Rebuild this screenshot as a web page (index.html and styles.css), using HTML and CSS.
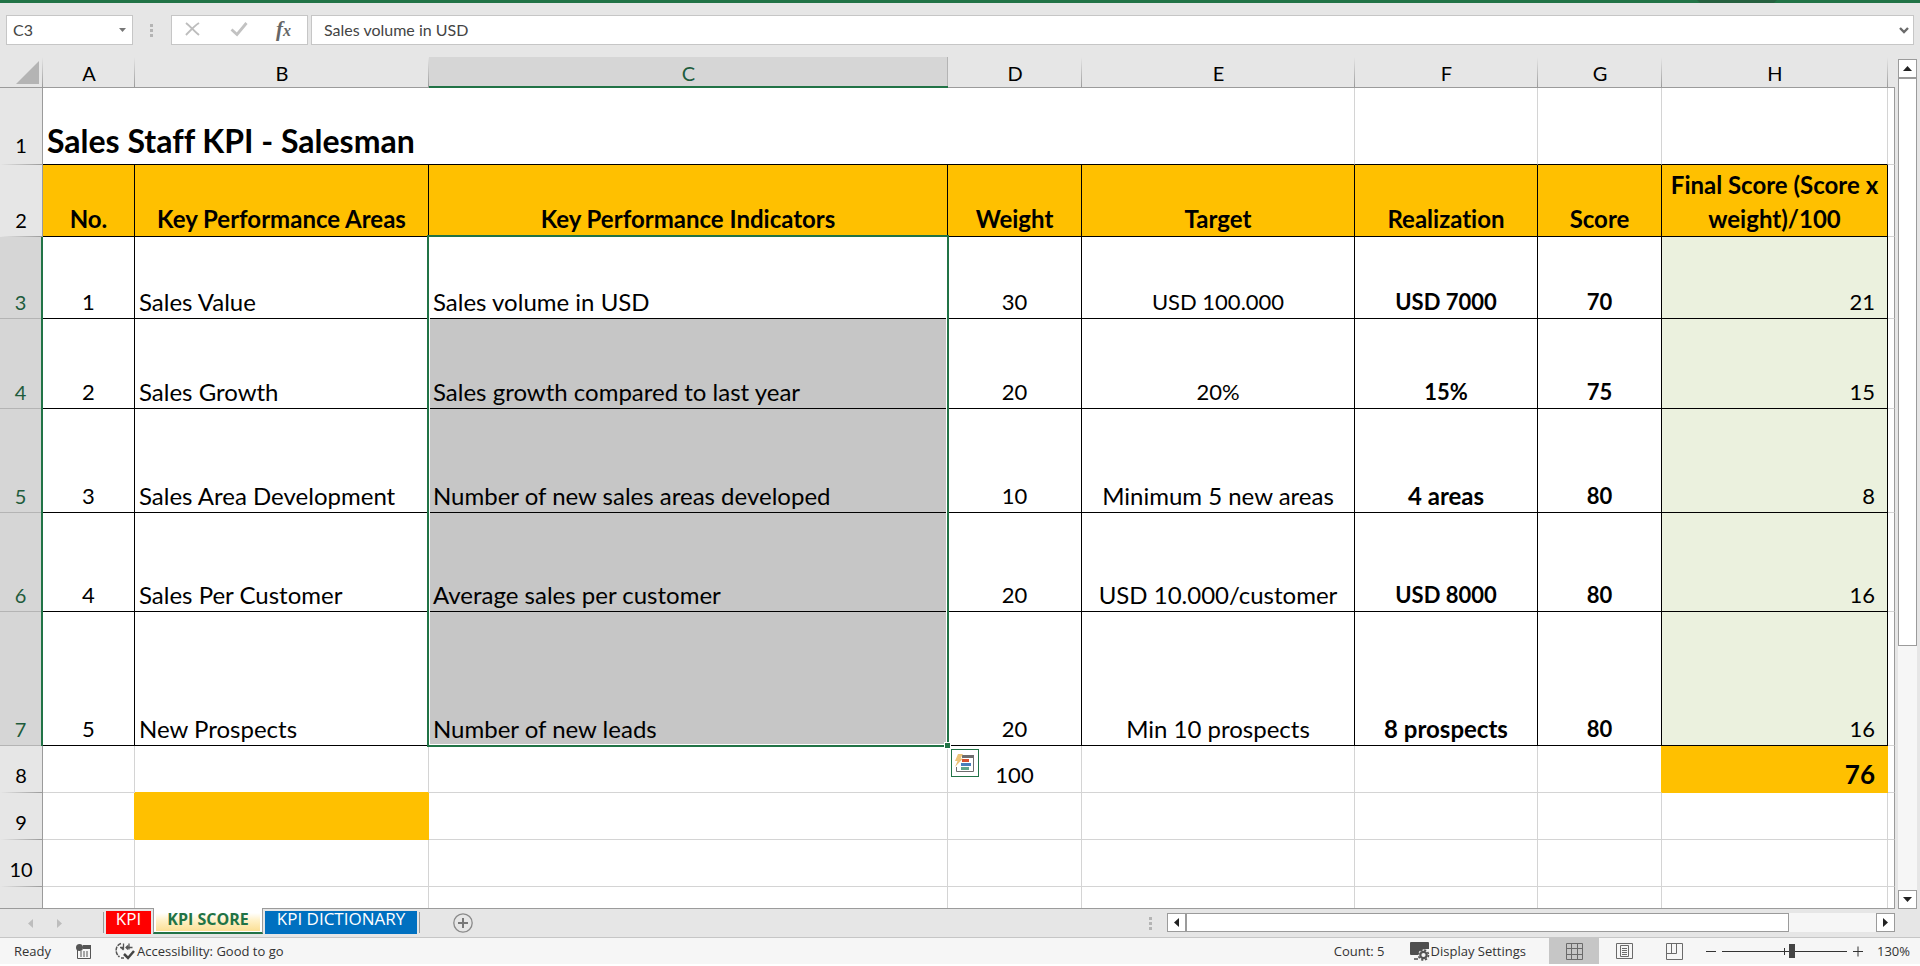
FILE: index.html
```html
<!DOCTYPE html>
<html lang="en">
<head>
<meta charset="utf-8">
<title>Sales Staff KPI - Salesman</title>
<link rel="stylesheet" href="styles.css">
</head>
<body>
<div class="app">
  <div class="ribbon-edge"><span class="ribbon-shade"></span></div>

  <div class="formula-bar">
    <div class="name-box">
      <input class="name-input" type="text" value="C3" aria-label="Name box">
      <button class="plain-btn name-drop" type="button" aria-label="Open name list">
        <svg width="7" height="4" viewBox="0 0 7 4"><path d="M0 0h7L3.500 4z" fill="#777"/></svg>
      </button>
    </div>
    <span class="grip" aria-hidden="true"><i></i><i></i><i></i></span>
    <div class="fx-box">
      <button class="plain-btn" type="button" aria-label="Cancel">
        <svg width="18" height="16" viewBox="0 0 18 16"><path d="M2 2c4 3 8 8 13 12M15 2C10 5 6 10 2 14" fill="none" stroke="#bdbdbd" stroke-width="2"/></svg>
      </button>
      <button class="plain-btn" type="button" aria-label="Enter">
        <svg width="18" height="16" viewBox="0 0 18 16"><path d="M1.500 8.500l5.500 5L16.500 2" fill="none" stroke="#c2c2c2" stroke-width="2.800"/></svg>
      </button>
      <button class="plain-btn fx-btn" type="button" aria-label="Insert function"><span class="fx-f">f</span><span class="fx-x">x</span></button>
    </div>
    <div class="formula-box">
      <input class="formula-input" type="text" value="Sales volume in USD" aria-label="Formula">
      <button class="plain-btn" type="button" aria-label="Expand formula bar">
        <svg width="10" height="7" viewBox="0 0 10 7"><path d="M1 1l4 4 4-4" fill="none" stroke="#6a6a6a" stroke-width="2.400"/></svg>
      </button>
    </div>
  </div>

  <div class="workspace">
    <div class="grid">
      <table class="sheet">
        <colgroup>
          <col class="c-head"><col class="c-a"><col class="c-b"><col class="c-c"><col class="c-d"><col class="c-e"><col class="c-f"><col class="c-g"><col class="c-h"><col>
        </colgroup>
        <thead>
          <tr class="r-cols">
            <th class="corner"><svg width="23" height="23" viewBox="0 0 23 23"><path d="M23 0v23H0z" fill="#b4b4b4"/></svg></th>
            <th scope="col">A</th><th scope="col">B</th><th scope="col" class="picked">C</th><th scope="col">D</th><th scope="col">E</th><th scope="col">F</th><th scope="col">G</th><th scope="col">H</th><th class="rest"></th>
          </tr>
        </thead>
        <tbody>
          <tr class="r1"><th scope="row">1</th><td class="title ink-b" colspan="5">Sales Staff KPI - Salesman</td><td class="ink-b"></td><td class="ink-b"></td><td class="ink-b"></td><td class="rest"></td></tr>
          <tr class="r2 heading"><th scope="row">2</th><td>No.</td><td>Key Performance Areas</td><td>Key Performance Indicators</td><td>Weight</td><td>Target</td><td>Realization</td><td>Score</td><td>Final Score (Score x weight)/100</td><td class="rest"></td></tr>
          <tr class="r3 data"><th scope="row">3</th><td>1</td><td class="left">Sales Value</td><td class="left anchor">Sales volume in USD
              <div class="selection"><span class="handle"></span>
                <button class="plain-btn quick" type="button" aria-label="Quick analysis">
                  <svg width="20" height="19" viewBox="0 0 20 19"><path d="M1.500 13v4.500h17V2" fill="none" stroke="#6d6d6d"/><path d="M7 1h12v3H7z" fill="#6d6d6d"/><path d="M7 5h7v3H7z" fill="#d9502e"/><path d="M6 9h10v3H6z" fill="#4a7ebb"/><path d="M6 13h8v3H6z" fill="#5fa58c"/><path d="M3 0h5L5.500 4.500H8L0 13l2.500-6H0z" fill="#edc377"/></svg>
                </button>
              </div></td><td>30</td><td>USD 100.000</td><td class="bold">USD 7000</td><td class="bold">70</td><td class="final">21</td><td class="rest"></td></tr>
          <tr class="r4 data"><th scope="row">4</th><td>2</td><td class="left">Sales Growth</td><td class="left shaded">Sales growth compared to last year</td><td>20</td><td>20%</td><td class="bold">15%</td><td class="bold">75</td><td class="final">15</td><td class="rest"></td></tr>
          <tr class="r5 data"><th scope="row">5</th><td>3</td><td class="left">Sales Area Development</td><td class="left shaded">Number of new sales areas developed</td><td>10</td><td class="words">Minimum 5 new areas</td><td class="bold words">4 areas</td><td class="bold">80</td><td class="final">8</td><td class="rest"></td></tr>
          <tr class="r6 data"><th scope="row">6</th><td>4</td><td class="left">Sales Per Customer</td><td class="left shaded">Average sales per customer</td><td>20</td><td class="words">USD 10.000/customer</td><td class="bold">USD 8000</td><td class="bold">80</td><td class="final">16</td><td class="rest"></td></tr>
          <tr class="r7 data"><th scope="row">7</th><td>5</td><td class="left">New Prospects</td><td class="left shaded">Number of new leads</td><td>20</td><td class="words">Min 10 prospects</td><td class="bold words">8 prospects</td><td class="bold">80</td><td class="final">16</td><td class="rest"></td></tr>
          <tr class="r-plain"><th scope="row">8</th><td></td><td class="gold-b"></td><td></td><td>100</td><td></td><td></td><td class="gold-r"></td><td class="total">76</td><td></td></tr>
          <tr class="r-plain"><th scope="row">9</th><td class="gold-r"></td><td class="gold"></td><td></td><td></td><td></td><td></td><td></td><td></td><td></td></tr>
          <tr class="r-plain"><th scope="row">10</th><td></td><td></td><td></td><td></td><td></td><td></td><td></td><td></td><td></td></tr>
          <tr class="r-plain"><th scope="row"></th><td></td><td></td><td></td><td></td><td></td><td></td><td></td><td></td><td></td></tr>
        </tbody>
      </table>
    </div>
    <div class="vscroll">
      <button class="scroll-btn" type="button" aria-label="Scroll up"><svg width="9" height="5" viewBox="0 0 9 5"><path d="M0 5h9L4.500 0z" fill="#222"/></svg></button>
      <div class="vtrack"><div class="vthumb"></div></div>
      <button class="scroll-btn" type="button" aria-label="Scroll down"><svg width="9" height="5" viewBox="0 0 9 5"><path d="M0 0h9L4.500 5z" fill="#222"/></svg></button>
    </div>
  </div>

  <div class="tab-strip">
    <div class="tab-nav">
      <button class="plain-btn" type="button" aria-label="Previous sheet"><svg width="5" height="9" viewBox="0 0 5 9"><path d="M5 0v9L0 4.500z" fill="#bdbdbd"/></svg></button>
      <button class="plain-btn" type="button" aria-label="Next sheet"><svg width="5" height="9" viewBox="0 0 5 9"><path d="M0 0v9l5-4.500z" fill="#bdbdbd"/></svg></button>
    </div>
    <div class="tabs">
      <button class="tab tab-red" type="button">KPI</button>
      <button class="tab tab-active" type="button"><span class="tab-glow">KPI SCORE</span></button>
      <button class="tab tab-blue" type="button">KPI DICTIONARY</button>
    </div>
    <button class="plain-btn add-sheet" type="button" aria-label="New sheet">
      <svg width="20" height="20" viewBox="0 0 20 20"><circle cx="10" cy="10" r="9.200" fill="none" stroke="#8a8a8a" stroke-width="1.300"/><path d="M10 5v10M5 10h10" stroke="#777" stroke-width="2"/></svg>
    </button>
    <span class="grip strip-grip" aria-hidden="true"><i></i><i></i><i></i></span>
    <div class="hscroll">
      <button class="scroll-btn" type="button" aria-label="Scroll left"><svg width="5" height="9" viewBox="0 0 5 9"><path d="M5 0v9L0 4.500z" fill="#222"/></svg></button>
      <div class="htrack"><div class="hthumb"></div></div>
      <button class="scroll-btn" type="button" aria-label="Scroll right"><svg width="5" height="9" viewBox="0 0 5 9"><path d="M0 0v9l5-4.500z" fill="#222"/></svg></button>
    </div>
  </div>

  <div class="status">
    <span class="ready">Ready</span>
    <button class="plain-btn macro" type="button" aria-label="Record macro">
      <svg width="16" height="15" viewBox="0 0 16 15"><path d="M1.500 6v8.500h13V3" fill="none" stroke="#555"/><path d="M7 1h8v4H7z" fill="#555"/><circle cx="3.500" cy="3.500" r="3.500" fill="#555"/><path d="M4 8h2M7 8h2M10 8h2M4 10h2M7 10h2M10 10h2M4 12h2M7 12h2M10 12h2" stroke="#555"/></svg>
    </button>
    <button class="plain-btn access" type="button">
      <svg width="20" height="18" viewBox="0 0 20 18"><path d="M6 1.500C0 3.500-.5 11 4.500 15" fill="none" stroke="#555" stroke-width="1.500" stroke-dasharray="4 1"/><path d="M6 16h3" stroke="#555" stroke-width="1.500"/><path d="M8.500 1.500v6M6 5.500l2.500 2.500M14 1.500v6M17.500 5.500H11M13 3.500l-2 2 2 2M5 5.500h4" fill="none" stroke="#555" stroke-width="1.300"/><path d="M9 12l4 4 6-7" fill="none" stroke="#444" stroke-width="2.500"/></svg>
      Accessibility: Good to go
    </button>
    <span class="count">Count: 5</span>
    <button class="plain-btn display" type="button">
      <svg width="20" height="19" viewBox="0 0 20 19"><path d="M1 0h17a1 1 0 0 1 1 1v6h-5l-5 6H1a1 1 0 0 1-1-1V1a1 1 0 0 1 1-1z" fill="#4f4f4f"/><path d="M4 17h4" stroke="#4f4f4f" stroke-width="1.500"/><circle cx="13.500" cy="13" r="5.500" fill="#f6f6f6"/><circle cx="13.500" cy="13" r="3.200" fill="none" stroke="#555" stroke-width="2.200"/><circle cx="13.500" cy="13" r="5" fill="none" stroke="#555" stroke-width="1.600" stroke-dasharray="2.200 1.727"/></svg>
      Display Settings
    </button>
    <div class="views">
      <button class="plain-btn view view-on" type="button" aria-label="Normal view"><svg width="17" height="17" viewBox="0 0 17 17"><path d="M.5.5h16v16H.5zM5.500 0v17M11.500 0v17M0 5.500h17M0 11.500h17" fill="none" stroke="#6a6a6a"/></svg></button>
      <button class="plain-btn view" type="button" aria-label="Page layout view"><svg width="17" height="16" viewBox="0 0 17 16"><path d="M.5.5h16v15H.5zM4.500 2.500h8v11h-8zM6 5.500h5M6 7.500h5M6 9.500h5M6 11.500h5" fill="none" stroke="#6a6a6a"/></svg></button>
      <button class="plain-btn view" type="button" aria-label="Page break view"><svg width="17" height="17" viewBox="0 0 17 17"><path d="M.5.500h16v16H.5zM0 10.500h10.500V0M5.500 0v10" fill="none" stroke="#6a6a6a"/></svg></button>
    </div>
    <div class="zoom">
      <button class="plain-btn" type="button" aria-label="Zoom out"><svg width="10" height="11" viewBox="0 0 10 11"><path d="M0 5.500h10" stroke="#333"/></svg></button>
      <input class="zoom-range" type="range" min="10" max="190" value="111" aria-label="Zoom">
      <button class="plain-btn" type="button" aria-label="Zoom in"><svg width="10" height="11" viewBox="0 0 10 11"><path d="M0 5.500h10M5 .500v10" stroke="#333"/></svg></button>
    </div>
    <span class="percent">130%</span>
  </div>
</div>
</body>
</html>
```
FILE: styles.css
```css
* { box-sizing: border-box; }

body {
  margin: 0;
  font-family: "Open Sans", "Noto Sans", sans-serif;
  font-size: 13px;
  color: #333;
  background: #fff;
}

.app {
  display: flex;
  flex-direction: column;
  height: 100vh;
  padding-bottom: 2px;
  background: #fff;
}

.plain-btn {
  display: flex;
  align-items: center;
  justify-content: center;
  margin: 0;
  padding: 0;
  border: 0;
  background: none;
  color: inherit;
  font: inherit;
}

svg { display: block; flex: none; }

/* Ribbon edge and formula bar */
.ribbon-edge {
  display: flex;
  justify-content: flex-end;
  flex: none;
  height: 3px;
  padding-right: 143px;
  background: #217346;
}

.ribbon-shade {
  width: 80px;
  background: #25603f;
  clip-path: polygon(0 0, 100% 0, 96% 100%, 4% 100%);
}

.formula-bar {
  display: flex;
  flex: none;
  height: 54px;
  padding: 12px 6px;
  background: #e6e6e6;
  font-family: Lato, sans-serif;
  font-size: 16px;
}

.name-box, .fx-box, .formula-box {
  display: flex;
  align-items: center;
  border: 1px solid #c6c6c6;
  background: #fff;
}

.name-box { width: 127px; padding: 0 6px; }

.name-input, .formula-input {
  min-width: 0;
  flex: 1;
  padding: 0 0 2px;
  border: 0;
  outline: 0;
  background: none;
  color: #444;
  font: inherit;
}

.grip {
  display: flex;
  flex-direction: column;
  justify-content: center;
  gap: 2px;
  width: 3px;
  margin: 0 18px 0 17px;
}

.grip i { height: 3px; background: #b4b4b4; }

.fx-box { width: 137px; margin-right: 3px; padding: 0 16px 2px 12px; justify-content: space-between; }

.fx-btn { align-items: baseline; font-family: "Liberation Serif", serif; font-style: italic; font-weight: bold; color: #666; }
.fx-f { font-size: 21px; line-height: 24px; }
.fx-x { font-size: 16px; }

.formula-box { flex: 1; padding: 0 4px 0 12px; }

/* Worksheet */
.workspace { display: flex; flex: 1; min-height: 0; background: #e6e6e6; }

.grid {
  flex: 1;
  min-width: 0;
  overflow: hidden;
  border-bottom: 1px solid #9b9b9b;
}

.sheet {
  width: 100%;
  table-layout: fixed;
  border-collapse: separate;
  border-spacing: 0;
  font-family: Lato, sans-serif;
  font-size: 22px;
  font-variant-ligatures: none;
  line-height: 34px;
  color: #000;
}

.c-head { width: 43px; }
.c-a { width: 92px; }
.c-b { width: 294px; }
.c-c { width: 519px; }
.c-d { width: 134px; }
.c-e { width: 273px; }
.c-f { width: 183px; }
.c-g { width: 124px; }
.c-h { width: 226px; }

.sheet th {
  padding: 0;
  border-right: 1px solid #9b9b9b;
  background: linear-gradient(to right, #e6e6e6, #9b9b9b) bottom / 100% 1px no-repeat #e6e6e6;
  font-size: 20px;
  font-weight: normal;
  vertical-align: bottom;
}

.sheet thead th {
  padding-top: 2px;
  border-right: 0;
  border-bottom: 1px solid #9b9b9b;
  background: linear-gradient(#e6e6e6, #9b9b9b) right / 1px 100% no-repeat #e6e6e6;
  vertical-align: middle;
  line-height: 24px;
}

.sheet thead .corner { padding: 4px 4px 3px 16px; }
.sheet thead .rest { background: #e6e6e6; }

.sheet thead .picked {
  border-bottom: 2px solid #217346;
  background: linear-gradient(#b4b4b4, #b4b4b4) right / 1px 100% no-repeat #d6d6d6;
  color: #1e5c3c;
}

.sheet td {
  padding: 0 4px;
  border-right: 1px solid #d4d4d4;
  border-bottom: 1px solid #d4d4d4;
  background: #fff;
  text-align: center;
  vertical-align: bottom;
}

.sheet td:last-child { border-right-color: #9b9b9b; }

.r-cols { height: 31px; }
.r1 { height: 77px; }
.r2 { height: 72px; }
.r3 { height: 82px; }
.r4 { height: 90px; }
.r5 { height: 104px; }
.r6 { height: 99px; }
.r7 { height: 134px; }
.r-plain { height: 47px; }

.sheet .title { text-align: left; font-size: 32px; font-weight: bold; line-height: 46px; }
.sheet .ink-b { border-bottom-color: #000; }
.r1 th { line-height: 40px; }
.r-plain th { line-height: 36px; }

.heading td { font-size: 24px; }
.heading td:not(.rest) { border-color: #000; background: #ffc000; font-weight: bold; }
.data td { line-height: 32px; }
.data td:not(.rest) { border-color: #000; }

.data th {
  border-right: 2px solid #217346;
  background: linear-gradient(#b4b4b4, #b4b4b4) bottom / 100% 1px no-repeat #d6d6d6;
  color: #1e5c3c;
}

.sheet .left { font-size: 24px; text-align: left; }
.sheet .words { font-size: 24px; }
.sheet .bold { font-weight: bold; }
.sheet .shaded { background: #c6c6c6; }
.sheet .final { padding-right: 12px; background: #ebf1de; text-align: right; }
.sheet .total { padding-right: 12px; border-color: #ffc000; background: #ffc000; font-size: 26px; font-weight: bold; line-height: 36px; text-align: right; }
.sheet .gold { border-color: #ffc000; background: #ffc000; }
.sheet .gold-b { border-bottom-color: #ffc000; }
.sheet .gold-r { border-right-color: #ffc000; }

/* Outline around C3:C7 */
.anchor { position: relative; }

.selection {
  position: absolute;
  z-index: 1;
  top: -2px;
  left: -2px;
  right: -2px;
  height: 512px;
  border: 2px solid #217346;
  box-shadow: inset 0 0 0 1px #fff;
}

.handle {
  position: absolute;
  right: -4px;
  bottom: -4px;
  width: 7px;
  height: 7px;
  border: 1px solid #fff;
  background: #217346;
}

.quick {
  position: absolute;
  right: -32px;
  bottom: -32px;
  width: 28px;
  height: 28px;
  border: 1px solid #217346;
  background: #fff;
}

/* Scroll bars */
.scroll-btn {
  display: flex;
  align-items: center;
  justify-content: center;
  flex: none;
  width: 19px;
  height: 19px;
  padding: 0;
  border: 1px solid #9b9b9b;
  background: #fff;
}

.vscroll { display: flex; flex-direction: column; width: 19px; margin: 2px 3px 0; }
.vtrack { flex: 1; background: #f6f6f6; }
.vthumb { height: 70%; border: 1px solid #9b9b9b; background: #fff; }

.hscroll { display: flex; width: 38.4%; height: 19px; margin-top: 4px; }
.htrack { flex: 1; background: #f6f6f6; }
.hthumb { width: 87.4%; height: 100%; border: 1px solid #9b9b9b; background: #fff; }

/* Sheet tabs */
.tab-strip {
  display: flex;
  flex: none;
  height: 28px;
  padding-right: 25px;
  background: #e6e6e6;
  font-size: 17px;
}

.tab-nav { display: flex; gap: 24px; width: 103px; padding-left: 28px; }

.tabs { position: relative; display: flex; height: 25px; }
.tabs::before, .tabs::after { content: ""; width: 1px; height: 21px; margin-top: 3px; background: #9b9b9b; }

.tab {
  height: 23px;
  margin: 2px 2px 0;
  padding: 0;
  border: 0;
  color: #fff;
  font: inherit;
  line-height: 16px;
  white-space: nowrap;
  display: flex;
  justify-content: center;
}

.tab-red { width: 45px; background: #f00; }
.tab-blue { width: 152px; background: #0070c0; }

.tab-active {
  width: 110px;
  height: 26px;
  margin: -1px 0 0;
  padding: 5px 2px 1px;
  border: solid #9b9b9b;
  border-width: 0 1px;
  border-bottom: 2px solid #217346;
  background: #fff;
  color: #217346;
  font-size: 16px;
  font-weight: bold;
  line-height: 13px;
}

.tab-glow { flex: 1; height: 18px; background: linear-gradient(#fff, #fff1c8 40%, #fbdf95); }

.add-sheet { margin-left: 33px; }
.strip-grip { margin: 0 15px 0 auto; }

/* Status bar */
.status {
  display: flex;
  align-items: center;
  flex: none;
  height: 27px;
  border-top: 1px solid #c6c6c6;
  background: #f6f6f6;
  white-space: nowrap;
}

.ready { width: 76px; padding-left: 14px; }
.access { gap: 2px; margin-left: 23px; }
.count { margin-left: auto; }
.display { gap: 1px; margin-left: 25px; }
.views { display: flex; height: 100%; margin-left: 23px; }
.view { width: 50px; }
.view-on { background: #c6c6c6; }
.zoom { display: flex; gap: 6px; margin-left: 7px; }

.zoom-range {
  width: 125px;
  height: 15px;
  margin: 0;
  appearance: none;
  background:
    linear-gradient(#333, #333) center / 1px 7px no-repeat,
    linear-gradient(#333, #333) center / 100% 1px no-repeat;
}

.zoom-range::-webkit-slider-thumb { appearance: none; width: 6px; height: 14px; background: #444; }

.percent { width: 40px; margin: 0 10px 0 7px; text-align: right; }
```
